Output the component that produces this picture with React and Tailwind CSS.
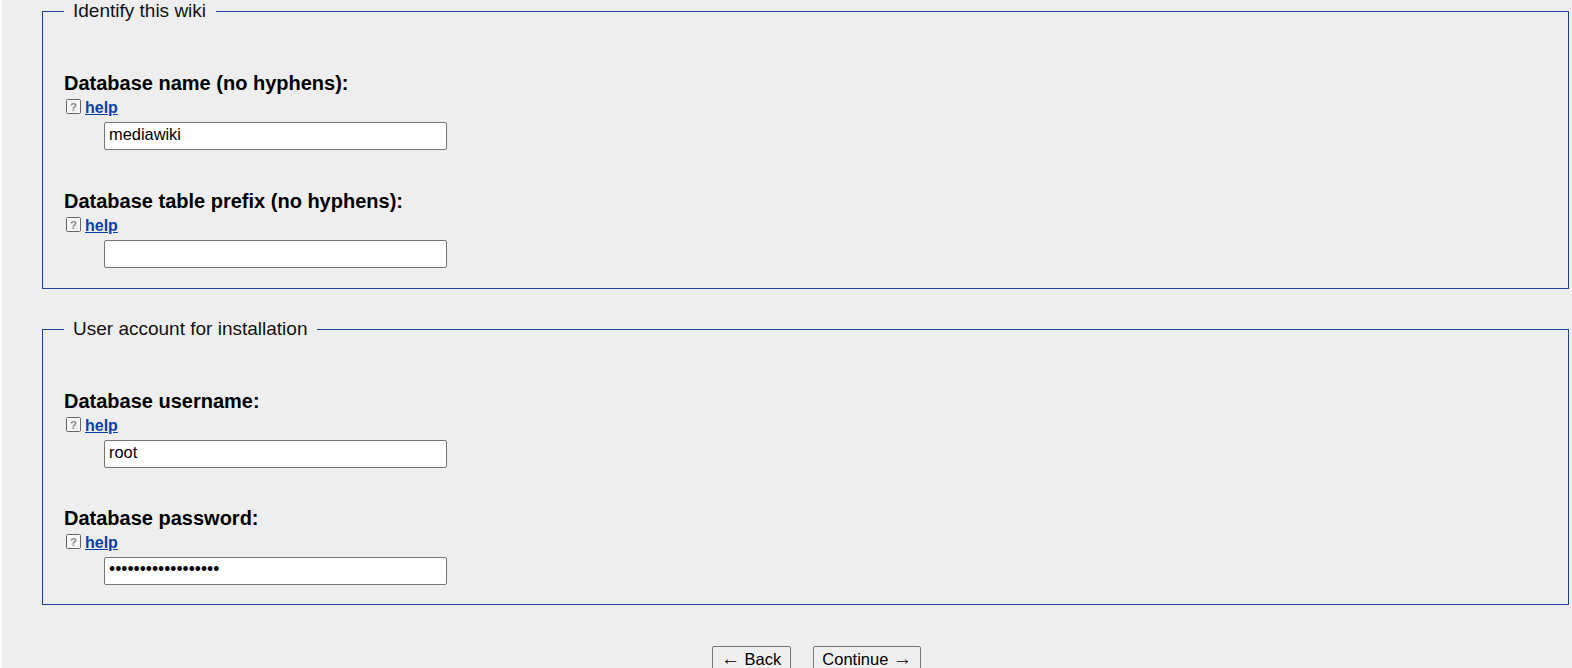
const sections = [
  {
    title: 'Identify this wiki',
    top: 'pt-[51px]',
    fields: [
      { label: 'Database name (no hyphens):', value: 'mediawiki', type: 'text' },
      { label: 'Database table prefix (no hyphens):', value: '', type: 'text' },
    ],
  },
  {
    title: 'User account for installation',
    top: 'pt-[50.6px]',
    fields: [
      { label: 'Database username:', value: 'root', type: 'text' },
      { label: 'Database password:', value: 'mediawikipassword1', type: 'password' },
    ],
  },
];

function HelpIcon() {
  return (
    <svg width="15" height="15" viewBox="0 0 15 15" className="shrink-0 -mt-[3px]">
      <rect x="0.5" y="0.5" width="14" height="14" rx="1" fill="#f6f6f6" stroke="#666666" />
      <text x="7.5" y="11.5" textAnchor="middle" fontSize="11.5" fontWeight="700" fill="#8c8c8c" fontFamily="Liberation Sans">?</text>
    </svg>
  );
}

function Field({ label, value, type }) {
  return (
    <div className="h-[117.6px]">
      <h3 className="text-[20px] leading-[21px] font-bold text-black">{label}</h3>
      <div className="flex items-center gap-[4px] h-[18px] mt-[5px] pl-[2px]">
        <HelpIcon />
        <a href="#" className="text-[16px] leading-[18px] font-bold text-[#0d3fa8] underline">help</a>
      </div>
      <input
        type={type}
        defaultValue={value}
        className={`block ml-[40px] mt-[5px] w-[343px] h-[28px] px-[4px] pb-[3px] bg-white border border-[#767676] rounded-[2px] text-black outline-none ${type === 'password' ? 'text-[17.5px]' : 'text-[16.4px]'}`}
      />
    </div>
  );
}

export default function App() {
  return (
    <div className="w-[1572px] h-[668px] overflow-hidden bg-white pl-[2px] font-['Liberation_Sans',Arial,sans-serif]">
      <div className="h-full bg-[#eeeeee] pl-[40px] pr-[3px]">
        {sections.map((s, i) => (
          <fieldset key={s.title} className={`border border-[#1f4196] px-[21px] ${i === 0 ? 'h-[289px]' : 'h-[287px] mt-[29px]'}`}>
            <legend className="pl-[9px] pr-[10px] text-[19px] leading-[22px] text-[#111111]">{s.title}</legend>
            <div className={s.top}>
              {s.fields.map(f => <Field key={f.label} {...f} />)}
            </div>
          </fieldset>
        ))}
        <div className="flex justify-center gap-[22px] mt-[41px] pl-[22px]">
          <button className="h-[28px] px-[8.5px] pb-[4px] border border-[#767676] rounded-[2px] bg-[#efefef] text-[16.5px] leading-none text-black"><span className="text-[19px] leading-none">←</span> Back</button>
          <button className="h-[28px] px-[8.5px] pb-[4px] border border-[#767676] rounded-[2px] bg-[#efefef] text-[16.5px] leading-none text-black">Continue <span className="text-[19px] leading-none">→</span></button>
        </div>
      </div>
    </div>
  );
}
